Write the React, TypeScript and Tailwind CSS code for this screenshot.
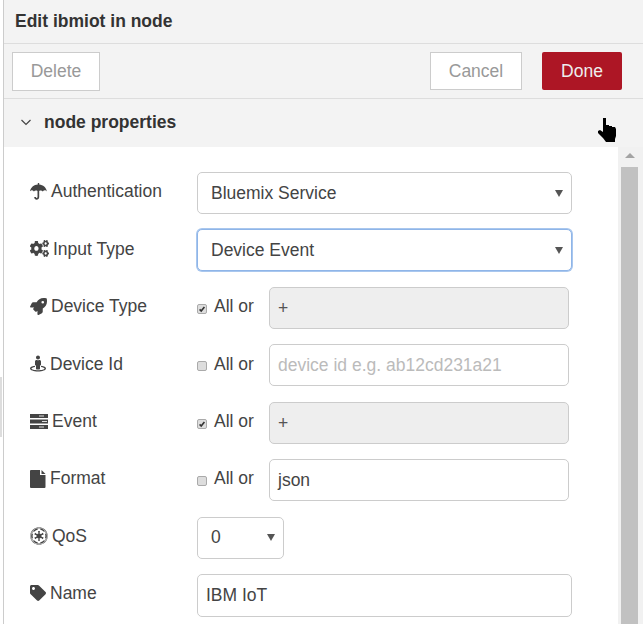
import React from 'react';
import { FaCogs, FaRocket, FaStreetView, FaEmpire, FaTag } from 'react-icons/fa';

const Label = ({ icon, text, w }: { icon: React.ReactNode; text: string; w: string }) => (
  <div className="w-[167px] shrink-0 flex items-center gap-[4px] text-[#444] -mt-[3px]">
    <span className={`${w} flex items-center justify-start`}>{icon}</span>
    <span>{text}</span>
  </div>
);

const Select = ({ value, focus, w }: { value: string; focus?: boolean; w: string }) => (
  <div
    className={`${w} h-[42px] bg-white rounded-[5px] border flex items-center justify-between pl-[13px] pr-[8px] text-[#444] ${
      focus ? 'border-[#8fb5e8] shadow-[0_0_0_1px_#a9c7ee]' : 'border-[#ccc]'
    }`}
  >
    <span>{value}</span>
    <span className="w-0 h-0 border-x-[4px] border-x-transparent border-t-[7px] border-t-[#555]" />
  </div>
);

const AllOr = ({ checked, value, placeholder, disabled }: { checked: boolean; value?: string; placeholder?: string; disabled?: boolean }) => (
  <div className="flex items-center">
    <span className="w-[10px] h-[10px] mt-[2px] rounded-[2px] bg-[#ddd] border border-[#aaa] flex items-center justify-center">
      {checked && (
        <svg viewBox="0 0 10 10" className="w-[10px] h-[10px]">
          <path d="M2 5.500 L4 7.500 L8 2.500" fill="none" stroke="#333" strokeWidth="2" />
        </svg>
      )}
    </span>
    <span className="ml-[7px] w-[55px] -mt-[3px] text-[#444]">All or</span>
    <div
      className={`w-[300px] h-[42px] rounded-[5px] border border-[#ccc] flex items-center px-[8px] ${
        disabled ? 'bg-[#eee] text-[#555]' : 'bg-white text-[#444]'
      }`}
    >
      {value ? value : <span className="text-[#bbb]">{placeholder}</span>}
    </div>
  </div>
);

const Row = ({ children }: { children: React.ReactNode }) => <div className="flex items-center h-[42px]">{children}</div>;

export default function App() {
  return (
    <div className="relative w-[643px] h-[624px] overflow-hidden bg-white text-[17.5px] font-['Liberation_Sans',Arial,sans-serif]">
      <div className="ml-[3px] h-full border-l border-[#ccc] bg-[#f3f3f3] flex flex-col">
        <div className="h-[43px] shrink-0 flex items-center pl-[11px] font-bold text-[#333] border-b border-[#ddd] box-content">
          Edit ibmiot in node
        </div>
        <div className="h-[54px] shrink-0 flex items-center justify-between pl-[8px] pr-[21px] border-b border-[#ddd] box-content">
          <button className="w-[88px] h-[39px] mt-[1px] bg-white border border-[#ccc] text-[#999]">Delete</button>
          <div className="flex gap-[20px]">
            <button className="w-[92px] h-[38px] bg-white border border-[#ccc] text-[#999]">Cancel</button>
            <button className="w-[80px] h-[38px] bg-[#ad1625] rounded-[2px] text-[#eee]">Done</button>
          </div>
        </div>
        <div className="h-[48px] shrink-0 flex items-center pl-[16px] pb-[2px] font-bold text-[#333]">
          <svg viewBox="0 0 12 12" className="w-[12px] h-[12px]">
            <path d="M1.500 4 L6 8.500 L10.500 4" fill="none" stroke="#444" strokeWidth="1.2" />
          </svg>
          <span className="ml-[12px]">node properties</span>
        </div>
        <div className="flex-1 flex min-h-0">
          <div className="w-[614px] bg-white pl-[26px] pt-[25px] flex flex-col gap-[15.43px]">
            <Row>
              <Label
                w="w-[17px]"
                text="Authentication"
                icon={
                  <svg viewBox="0 0 17 18" className="w-[17px] h-[18px]">
                    <path d="M7.800 0 h1.400 v1.500 c4 .3 6.800 3 7.800 7 c-1-1.400-3-1.600-4.200 0 c-.8-1.200-2.400-1.400-3.600-.6 v6.100 c0 3.400-5 3.800-5 0 h1.700 c0 1.400 1.600 1.400 1.600 0 v-6.100 c-1.200-.8-2.800-.6-3.600 .6 c-1.200-1.600-3.200-1.400-4.200 0 c1-4 3.800-6.700 8.100-7 z" fill="#444" />
                  </svg>
                }
              />
              <Select value="Bluemix Service" w="w-[375px]" />
            </Row>
            <Row>
              <Label
                w="w-[19px]"
                icon={<FaCogs className="w-[19px] h-[17px] text-[#444]" preserveAspectRatio="none" />}
                text="Input Type"
              />
              <Select value="Device Event" focus w="w-[375px]" />
            </Row>
            <Row>
              <Label w="w-[17px]" icon={<FaRocket size={17} className="text-[#444]" />} text="Device Type" />
              <AllOr checked value="+" disabled />
            </Row>
            <Row>
              <Label w="w-[16px]" icon={<FaStreetView size={17} className="text-[#444]" />} text="Device Id" />
              <AllOr checked={false} placeholder="device id e.g. ab12cd231a21" />
            </Row>
            <Row>
              <Label
                w="w-[18px]"
                text="Event"
                icon={
                  <svg viewBox="0 0 18 15" className="w-[18px] h-[15px]">
                    <path d="M0 0 h18 v4 h-18 z M0 5.500 h18 v4 h-18 z M0 11 h18 v4 h-18 z" fill="#444" />
                    <path d="M9 1.500 h5 v1 h-5 z M12 7 h5 v1 h-5 z M9 12.500 h5 v1 h-5 z" fill="#ddd" />
                  </svg>
                }
              />
              <AllOr checked value="+" disabled />
            </Row>
            <Row>
              <Label
                w="w-[16px]"
                text="Format"
                icon={
                  <svg viewBox="0 0 16 18" className="w-[16px] h-[18px]">
                    <path d="M1 0 h9 v5 h5.500 v12 a1 1 0 0 1 -1 1 h-13.500 a1 1 0 0 1 -1 -1 v-16 a1 1 0 0 1 1 -1 z M11.500 0 l4 4 h-4 z" fill="#444" />
                  </svg>
                }
              />
              <AllOr checked={false} value="json" />
            </Row>
            <Row>
              <Label w="w-[18px]" icon={<FaEmpire size={18} className="text-[#444]" />} text="QoS" />
              <Select value="0" w="w-[87px]" />
            </Row>
            <Row>
              <Label w="w-[16px]" icon={<FaTag size={16} className="text-[#444]" />} text="Name" />
              <div className="w-[375px] h-[43px] self-start bg-white rounded-[5px] border border-[#ccc] flex items-center px-[8px] text-[#444]">IBM IoT</div>
            </Row>
          </div>
          <div className="w-[25px] bg-[#f1f1f1] flex flex-col items-center pt-[6px] pr-[2px]">
            <span className="w-0 h-0 border-x-[5px] border-x-transparent border-b-[5px] border-b-[#a3a3a3]" />
            <div className="w-[17px] flex-1 mt-[9px] bg-[#c1c1c1]" />
          </div>
        </div>
      </div>
      {/* mouse pointer over the dialog */}
      <svg viewBox="0 0 19 25" className="absolute left-[598px] top-[118px] w-[19px] h-[25px]">
        <path d="M5 0 h3 v7 h3 v1 h3 v1 h3 l1 2 v7 l-1 3 v3 h-9 l-3-4 l-5-5 v-2 l2-1 l3 2 z" fill="#000" />
      </svg>
      <div className="absolute left-0 top-[377px] w-[2px] h-[60px] bg-[#ddd]" />
    </div>
  );
}
